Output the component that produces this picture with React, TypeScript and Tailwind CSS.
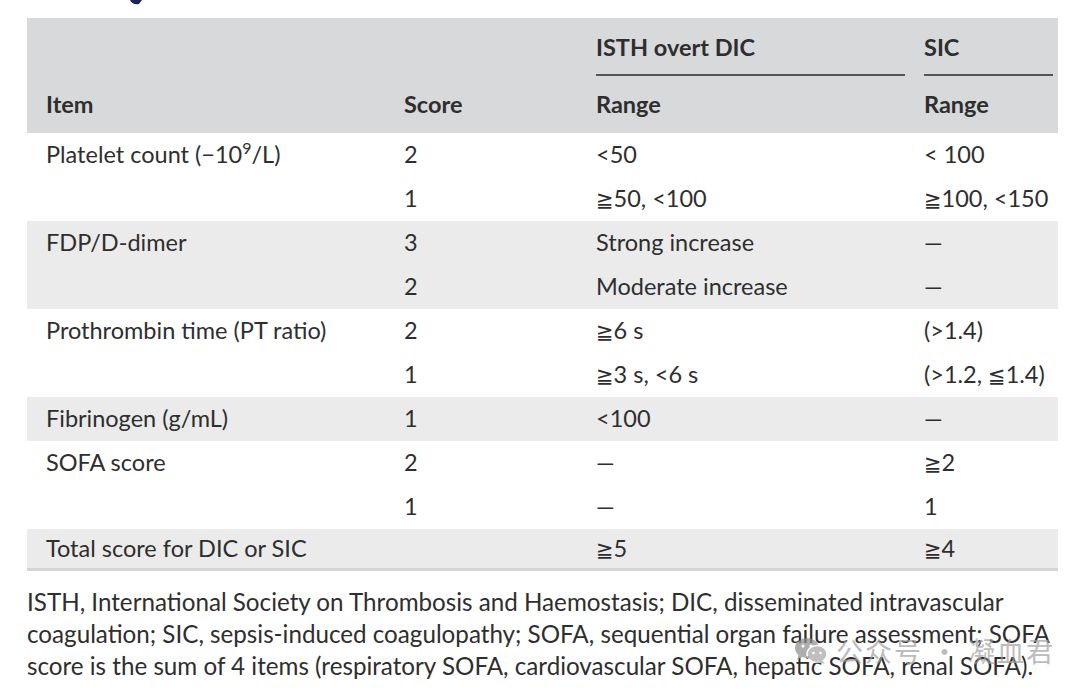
import React from "react";

// narrow math glyph like the original typeset table
const Ge = () => <span className="text-[21px]" style={{ fontFamily: "'DejaVu Sans', sans-serif" }}>≧</span>;
const Le = () => <span className="text-[21px]" style={{ fontFamily: "'DejaVu Sans', sans-serif" }}>≦</span>;

// rows of the DIC / SIC scoring table
type Row = { item?: React.ReactNode; score: string; isth: React.ReactNode; sic: React.ReactNode };

const groups: { shade: boolean; rows: Row[] }[] = [
  {
    shade: false,
    rows: [
      {
        item: (
          <>
            Platelet count (−10<span className="text-[16px] leading-none relative -top-[9px]">9</span>/L)
          </>
        ),
        score: "2",
        isth: "<50",
        sic: "< 100",
      },
      { score: "1", isth: <><Ge />50, &lt;100</>, sic: <><Ge />100, &lt;150</> },
    ],
  },
  {
    shade: true,
    rows: [
      { item: "FDP/D-dimer", score: "3", isth: "Strong increase", sic: "—" },
      { score: "2", isth: "Moderate increase", sic: "—" },
    ],
  },
  {
    shade: false,
    rows: [
      { item: "Prothrombin time (PT ratio)", score: "2", isth: <><Ge />6 s</>, sic: "(>1.4)" },
      { score: "1", isth: <><Ge />3 s, &lt;6 s</>, sic: <>(&gt;1.2, <Le />1.4)</> },
    ],
  },
  {
    shade: true,
    rows: [{ item: "Fibrinogen (g/mL)", score: "1", isth: "<100", sic: "—" }],
  },
  {
    shade: false,
    rows: [
      { item: "SOFA score", score: "2", isth: "—", sic: <><Ge />2</> },
      { score: "1", isth: "—", sic: "1" },
    ],
  },
];

const cols = "grid grid-cols-[358px_192px_328px_1fr] pl-[19px]";

function WeChatMark() {
  return (
    <svg width="34" height="28" viewBox="0 0 34 28" fill="none">
      <ellipse cx="13" cy="11" rx="12" ry="10" fill="#8c8c8c" />
      <path d="M5 17 L3 23 L10 19 Z" fill="#8c8c8c" />
      <ellipse cx="23" cy="17" rx="10" ry="8.5" fill="#a6a6a6" stroke="#fff" strokeWidth="1.5" />
      <path d="M28 23 L31 27 L24 25 Z" fill="#a6a6a6" />
      <circle cx="9" cy="9" r="1.6" fill="#fff" />
      <circle cx="17" cy="9" r="1.6" fill="#fff" />
      <circle cx="19.5" cy="16" r="1.3" fill="#fff" />
      <circle cx="26.5" cy="16" r="1.3" fill="#fff" />
    </svg>
  );
}

export default function App() {
  return (
    <div
      className="relative w-[1080px] h-[692px] overflow-hidden bg-white text-[#2e2e2e] text-[23.5px]"
      style={{ fontFamily: "Lato, 'Noto Sans', 'Noto Sans CJK SC', sans-serif" }}
    >
      {/* clipped heading descender above the table */}
      <svg className="absolute left-[128px] top-0" width="16" height="6" viewBox="0 0 16 6">
        <path d="M2 0 Q4 5 11 4 L14 0 Z" fill="#1b2657" />
      </svg>

      <div className="pt-[18px] pl-[27px] w-[1058px]">
        {/* header */}
        <div className={`${cols} bg-[#d8d9da] font-bold h-[115px]`}>
          <div className="flex items-end pb-[11px]">Item</div>
          <div className="flex items-end pb-[11px]">Score</div>
          <div className="flex flex-col pr-[19px]">
            <div className="h-[56px] flex items-center pt-[3px]">ISTH overt DIC</div>
            <div className="border-t-2 border-[#555]" />
            <div className="flex-1 flex items-center">Range</div>
          </div>
          <div className="flex flex-col pr-[5px]">
            <div className="h-[56px] flex items-center pt-[3px]">SIC</div>
            <div className="border-t-2 border-[#555]" />
            <div className="flex-1 flex items-center">Range</div>
          </div>
        </div>

        {/* body */}
        {groups.map((g, gi) => (
          <div key={gi} className={g.shade ? "bg-[#ebebeb]" : "bg-white"}>
            {g.rows.map((r, ri) => (
              <div key={ri} className={`${cols} h-[44px] items-center`}>
                <div>{r.item}</div>
                <div>{r.score}</div>
                <div className="whitespace-nowrap">{r.isth}</div>
                <div className="whitespace-nowrap">{r.sic}</div>
              </div>
            ))}
          </div>
        ))}

        <div className={`${cols} h-[42px] items-center bg-[#ebebeb] border-b-[3px] border-[#d3d4d5]`}>
          <div className="col-span-2">Total score for DIC or SIC</div>
          <div><Ge />5</div>
          <div><Ge />4</div>
        </div>

        {/* footnote */}
        <p className="mt-[15px] leading-[32px] whitespace-nowrap text-[24.2px]">
          ISTH, International Society on Thrombosis and Haemostasis; DIC, disseminated intravascular
          <br />
          coagulation; SIC, sepsis-induced coagulopathy; SOFA, sequential organ failure assessment; SOFA
          <br />
          score is the sum of 4 items (respiratory SOFA, cardiovascular SOFA, hepatic SOFA, renal SOFA).
        </p>
      </div>

      {/* watermark */}
      <div className="absolute left-[794px] top-[631px] flex items-center gap-[8px] opacity-70">
        <WeChatMark />
        <span
          className="text-[27px] text-[#a0a0a0] tracking-[2px]"
          style={{ fontFamily: "'Noto Sans CJK SC', sans-serif" }}
        >
          公众号 · 凝血君
        </span>
      </div>
    </div>
  );
}
